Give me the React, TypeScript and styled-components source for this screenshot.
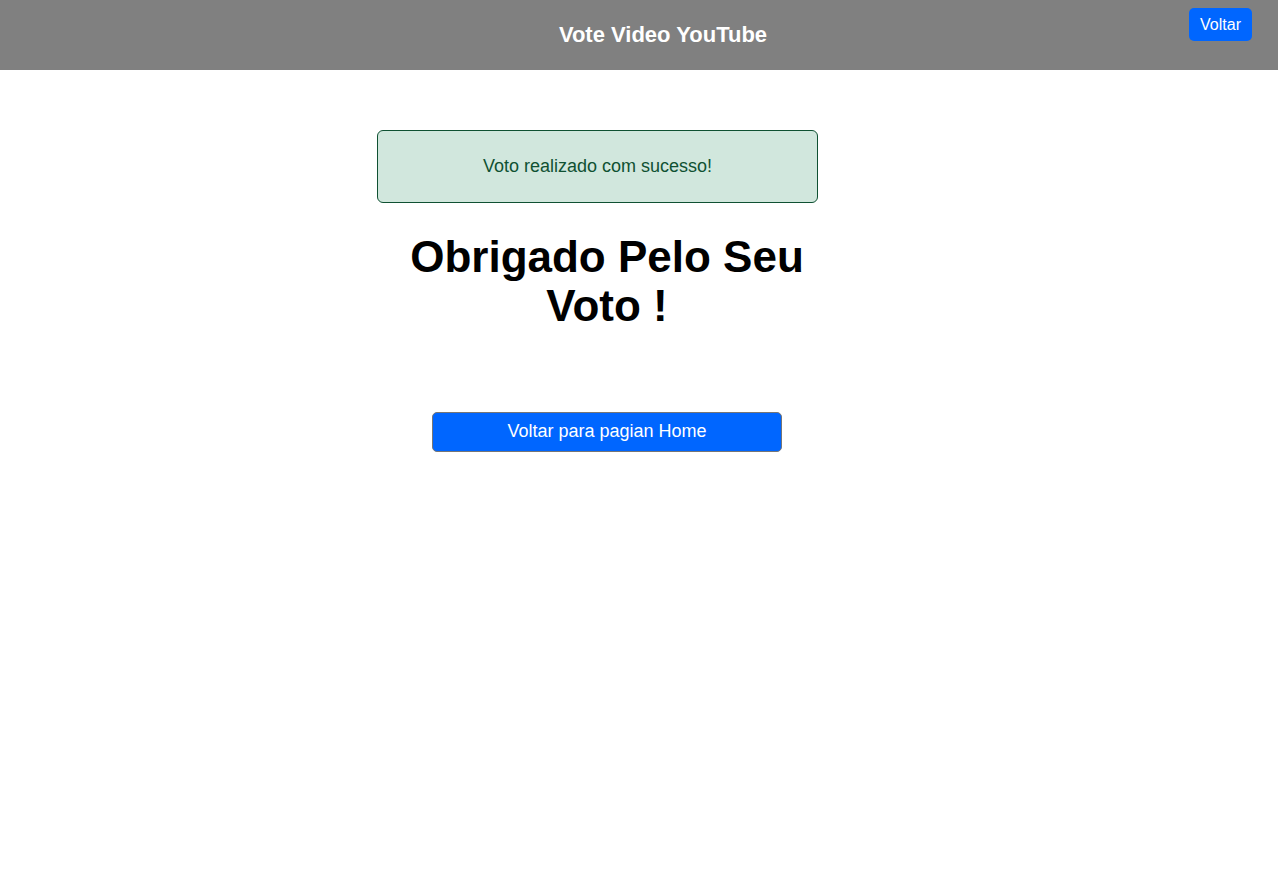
import React from "react";
import styled, { createGlobalStyle } from "styled-components";

const Global = createGlobalStyle`
  html, body { margin: 0; padding: 0; background: #fff; }
  body { font-family: "Liberation Sans", Arial, sans-serif; }
`;

const Header = styled.header`
  position: relative;
  height: 70px;
  background: #808080;
  display: flex;
  align-items: center;
  justify-content: center;
`;

const Title = styled.h1`
  margin: 0;
  margin-left: 48px;
  color: #fff;
  font-size: 22px;
  font-weight: 700;
`;

const TopButton = styled.button`
  position: absolute;
  top: 8px;
  right: 26px;
  height: 33px;
  padding: 0 11px;
  background: #0066ff;
  color: #fff;
  border: none;
  border-radius: 5px;
  font-family: "Liberation Sans", Arial, sans-serif;
  font-size: 16px;
`;

const Main = styled.main`
  width: 460px;
  margin: 60px 0 0 377px;
  display: flex;
  flex-direction: column;
  align-items: center;
`;

const Alert = styled.div`
  align-self: flex-start;
  box-sizing: border-box;
  width: 441px;
  height: 73px;
  background: #d1e7dd;
  border: 1px solid #0f5132;
  border-radius: 6px;
  color: #0f5132;
  font-size: 18px;
  display: flex;
  align-items: center;
  justify-content: center;
`;

const Heading = styled.h2`
  margin: 29px 0 0;
  font-size: 44px;
  line-height: 49px;
  font-weight: 700;
  text-align: center;
  color: #000;
`;

const HomeButton = styled.button`
  margin-top: 82px;
  width: 350px;
  height: 40px;
  padding: 0 0 2px;
  background: #0066ff;
  color: #fff;
  border: 1px solid #767676;
  border-radius: 5px;
  font-family: "Liberation Sans", Arial, sans-serif;
  font-size: 18px;
`;

export default function App() {
  return (
    <>
      <Global />
      <Header>
        <Title>Vote Video YouTube</Title>
        <TopButton>Voltar</TopButton>
      </Header>
      <Main>
        <Alert>Voto realizado com sucesso!</Alert>
        <Heading>Obrigado Pelo Seu Voto !</Heading>
        <HomeButton>Voltar para pagian Home</HomeButton>
      </Main>
    </>
  );
}
